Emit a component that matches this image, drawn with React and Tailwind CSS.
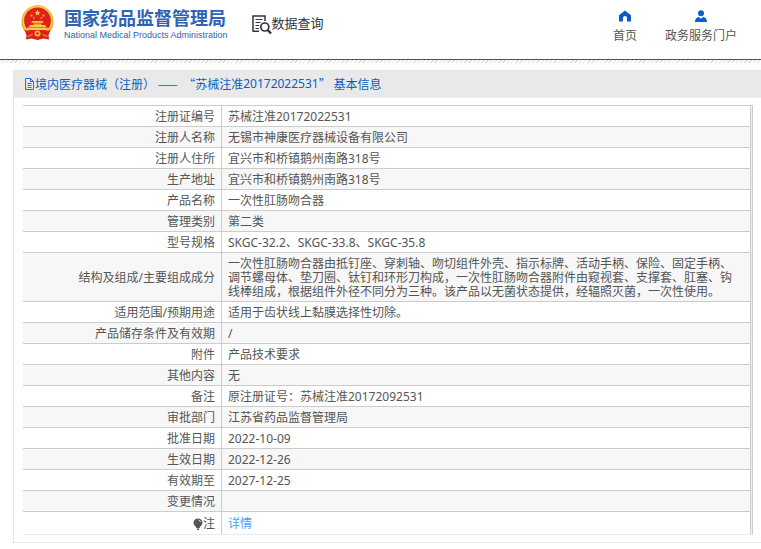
const rows = [
  { label: '注册证编号', value: '苏械注准20172022531' },
  { label: '注册人名称', value: '无锡市神康医疗器械设备有限公司' },
  { label: '注册人住所', value: '宜兴市和桥镇鹅州南路318号' },
  { label: '生产地址', value: '宜兴市和桥镇鹅州南路318号' },
  { label: '产品名称', value: '一次性肛肠吻合器' },
  { label: '管理类别', value: '第二类' },
  { label: '型号规格', value: 'SKGC-32.2、SKGC-33.8、SKGC-35.8' },
  {
    label: '结构及组成/主要组成成分',
    value:
      '一次性肛肠吻合器由抵钉座、穿刺轴、吻切组件外壳、指示标牌、活动手柄、保险、固定手柄、调节螺母体、垫刀圈、钛钉和环形刀构成，一次性肛肠吻合器附件由窥视套、支撑套、肛塞、钩线棒组成，根据组件外径不同分为三种。该产品以无菌状态提供，经辐照灭菌，一次性使用。',
  },
  { label: '适用范围/预期用途', value: '适用于齿状线上黏膜选择性切除。' },
  { label: '产品储存条件及有效期', value: '/' },
  { label: '附件', value: '产品技术要求' },
  { label: '其他内容', value: '无' },
  { label: '备注', value: '原注册证号：苏械注准20172092531' },
  { label: '审批部门', value: '江苏省药品监督管理局' },
  { label: '批准日期', value: '2022-10-09' },
  { label: '生效日期', value: '2022-12-26' },
  { label: '有效期至', value: '2027-12-25' },
  { label: '变更情况', value: '' },
]

function Emblem() {
  return (
    <svg width="33" height="36" viewBox="0 0 33 36" aria-hidden="true">
      <ellipse cx="16.5" cy="16.5" rx="16" ry="16.3" fill="#e3a52c" />
      <ellipse cx="16.5" cy="16" rx="15" ry="15.2" fill="#f6cf45" />
      <circle cx="16.5" cy="15.8" r="13.4" fill="#e0201b" />
      <path d="M16.5 4.8l.9 1.900 2.100.2-1.600 1.400.5 2.100-1.900-1.100-1.900 1.100.5-2.100-1.600-1.400 2.100-.2z" fill="#f9c93a" />
      <path d="M9.500 9.500h2v2h-2zM12 12.200h1.600v1.600H12zM21.500 9.500h2v2h-2zM19.500 12.200h1.600v1.600h-1.600z" fill="#f4a832" />
      <path d="M11.500 16h10l1.200 1.800h-12.400zM12.500 18.400h8v1.400h-8zM9 20h15l1.500 2.300h-18zM5.500 22.700h22l-1.300 2.400h-19.400z" fill="#f8cc4a" />
      <path d="M3.500 25l5.500 1.500h15l5.500-1.500-2 5 .5 4.500-5.500-1-6 1.500-6-1.500-5.500 1 .5-4.500z" fill="#d9201a" />
      <circle cx="16.500" cy="28.500" r="3" fill="#f3bb37" />
      <circle cx="16.500" cy="28.500" r="1.300" fill="#d9201a" />
      <path d="M6.500 31.500l5-2M26.500 31.500l-5-2" fill="none" stroke="#efae34" />
    </svg>
  )
}

function SearchDocIcon() {
  return (
    <svg width="20" height="20" viewBox="0 0 20 20" fill="none" stroke="#34343f" aria-hidden="true">
      <path d="M7 16.200H1V1h12v5" strokeWidth="1.500" />
      <path d="M3.500 4.500h7M3.500 7.500h5M3.500 10.500h3.500M3.500 13.500h3.500" strokeWidth="1.200" />
      <circle cx="12.800" cy="12" r="4" strokeWidth="1.700" />
      <path d="M15.700 15l3.300 3.500" strokeWidth="2.500" />
    </svg>
  )
}

function HomeIcon() {
  return (
    <svg width="12" height="12" viewBox="0 0 12 12" fill="#0a5fc4" aria-hidden="true">
      <path d="M6 .5L12 5.300V11.500H8V8a2 2 0 0 0-4 0v3.500H0V5.300z" />
    </svg>
  )
}

function UserIcon() {
  return (
    <svg width="12" height="12" viewBox="0 0 12 12" fill="#0a5fc4" aria-hidden="true">
      <circle cx="6" cy="3.200" r="3" />
      <path d="M0 12c0-3 1.500-4.700 3.800-5L6 8.800 8.200 7c2.300.3 3.800 2 3.800 5z" />
    </svg>
  )
}

function DocIcon() {
  return (
    <svg width="11" height="12" viewBox="0 0 11 12" fill="none" stroke="#2a6fc9" aria-hidden="true">
      <path d="M1.500 .5h5l3 3v8h-8zM6.500 .5v3h3M3.500 5.500h4M3.500 7.500h4M3.500 9.500h4" />
    </svg>
  )
}

function BulbIcon() {
  return (
    <svg width="10" height="12" viewBox="0 0 10 12" aria-hidden="true">
      <path d="M5 .5a4.300 4.300 0 0 0-2.600 7.800L3.500 10h3l1.100-1.700A4.300 4.300 0 0 0 5 .5zM3.500 10.500h3L5.800 12H4.200z" fill="#555" />
      <path d="M5.500 2a2.500 2.500 0 0 1 2 2.200" fill="none" stroke="#ddd" />
    </svg>
  )
}

export default function App() {
  return (
    <div className="bg-white font-['Noto_Sans','Noto_Sans_CJK_SC',sans-serif] text-xs text-[#555]">
      <header className="flex h-[60px] items-start justify-between border-b border-[#0a5fc4] pl-[21px] pr-6">
        <div className="flex items-start">
          <a href="#" className="flex gap-[10px] pt-[5px] text-[#2f62b3]">
            <Emblem />
            <div className="whitespace-nowrap pt-[3px]">
              <h1 className="text-lg font-bold leading-5">国家药品监督管理局</h1>
              <p className="font-['Liberation_Sans',sans-serif] text-[9px] leading-[14px]">
                National Medical Products Administration
              </p>
            </div>
          </a>
          <a href="#" className="ml-6 flex whitespace-nowrap pt-[15px] text-[#34343f]">
            <SearchDocIcon />
            <span className="text-[13px] leading-4">数据查询</span>
          </a>
        </div>
        <nav className="flex gap-7 whitespace-nowrap pt-[10px]">
          <a href="#" className="flex flex-col items-center gap-[6px] leading-4">
            <HomeIcon />
            首页
          </a>
          <a href="#" className="flex flex-col items-center gap-[6px] leading-4">
            <UserIcon />
            政务服务门户
          </a>
        </nav>
      </header>
      <div className="h-[3px] bg-[repeating-linear-gradient(135deg,#ddd_0px,#ddd_1px,#fff_1px,#fff_3px)]" />

      <main className="pl-[13px] pt-[7px]">
        <section className="border-b border-l border-[#e6e6e6]">
          <h2 className="flex h-7 items-center border-b border-[#ebeef5] bg-[#e9e9e9] pl-[10px] text-[#0a5fc4]">
            <DocIcon />
            <span className="font-['Noto_Sans_CJK_SC',sans-serif]">境内医疗器械（注册）&nbsp;——&nbsp;&nbsp;“苏械注准</span>
            20172022531
            <span className="font-['Noto_Sans_CJK_SC',sans-serif]">”&nbsp;基本信息</span>
          </h2>
          <div className="py-[7px] pl-[9px] pr-2">
            <div className="border-b border-r border-t border-b-[#e6ebf5] border-r-[#ccc] border-t-[#ccc] bg-[#eee] pr-px">
              <table className="w-full border-separate border-spacing-0 bg-white leading-[14px]">
                <tbody>
                  {rows.map((row) => (
                    <tr key={row.label} className="even:bg-[#f7f7f7]">
                      <th scope="row" className="w-[199px] border-b border-r border-[#ccc] pb-[2px] pr-[6px] pt-1 text-right font-normal">
                        {row.label}
                      </th>
                      <td className="border-b border-r border-[#ccc] pb-[2px] pl-[6px] pr-3 pt-1">{row.value}</td>
                    </tr>
                  ))}
                  <tr>
                    <th scope="row" className="border-r border-[#ccc] pb-[2px] pr-[6px] pt-1 font-normal leading-4">
                      <div className="flex items-center justify-end">
                        <BulbIcon />注
                      </div>
                    </th>
                    <td className="border-r border-[#ccc] pb-[2px] pl-[6px] pt-1 leading-4">
                      <a href="#" className="text-[#409eff]">详情</a>
                    </td>
                  </tr>
                </tbody>
              </table>
            </div>
          </div>
        </section>
      </main>
    </div>
  )
}
